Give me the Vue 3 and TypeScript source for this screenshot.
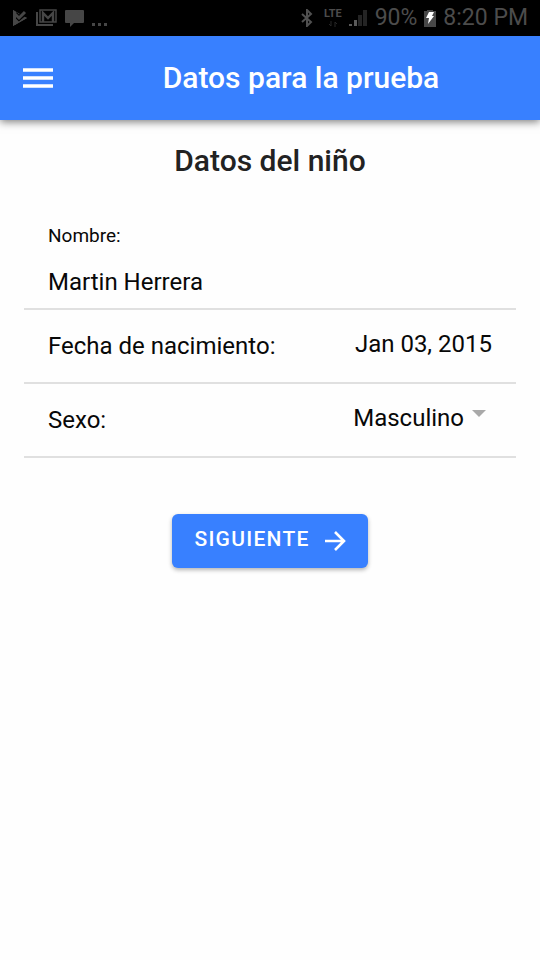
<script setup lang="ts">
import { ref } from 'vue'

const nombre = ref<string>('Martin Herrera')
const fecha = ref<string>('Jan 03, 2015')
const sexo = ref<string>('Masculino')
const opciones: string[] = ['Masculino', 'Femenino']
</script>

<template>
  <div class="screen">
    <div class="status">
      <div class="status-group left">
        <svg width="16" height="18" viewBox="0 0 16 18" aria-hidden="true">
          <path d="M1 1L15 9L1 17Z" fill="#464646" />
          <path d="M3 5L7 9L14 3" fill="none" stroke="#000" stroke-width="5" />
          <path d="M1 1L4 3V15L1 17Z" fill="#464646" />
          <path d="M3 5L7 9L13 3" fill="none" stroke="#464646" stroke-width="3" />
          <path d="M3 16V12L7 13L13 8L15 9Z" fill="#464646" />
        </svg>
        <svg width="21" height="18" viewBox="0 0 21 18" aria-hidden="true">
          <path d="M1 3V16H17" fill="none" stroke="#464646" stroke-width="2" />
          <path d="M4 1H20V13H4Z" fill="none" stroke="#464646" stroke-width="1.5" />
          <path d="M7 13V4L12 9L17 4V13" fill="none" stroke="#464646" stroke-width="2.4" />
        </svg>
        <svg width="19" height="18" viewBox="0 0 19 18" aria-hidden="true">
          <path d="M1 1H18Q19 1 19 2V13Q19 14 18 14H9L5 18V14H1Q0 14 0 13V2Q0 1 1 1Z" fill="#464646" />
        </svg>
        <svg width="15" height="18" viewBox="0 0 15 18" aria-hidden="true">
          <path d="M0 14H3V17H0ZM6 14H9V17H6ZM12 14H15V17H12Z" fill="#464646" />
        </svg>
      </div>
      <div class="status-group right">
        <svg width="12" height="18" viewBox="0 0 12 18" aria-hidden="true">
          <path d="M1 5L10 13L6 17V1L10 5L1 13" fill="none" stroke="#505050" stroke-width="2" />
        </svg>
        <span class="lte">
          <span>LTE</span>
          <svg width="10" height="6" viewBox="0 0 10 6" aria-hidden="true">
            <path d="M3 0V5M1 3L3 5M7 6V1M9 3L7 1" fill="none" stroke="#262626" />
          </svg>
        </span>
        <svg width="19" height="18" viewBox="0 0 19 18" aria-hidden="true">
          <path d="M0 15H3V17H0ZM5 11H8V17H5Z" fill="#5a5a5a" />
          <path d="M9 6H13V17H9ZM14 1H18V17H14Z" fill="#242424" />
        </svg>
        <span>90%</span>
        <svg width="12" height="18" viewBox="0 0 12 18" aria-hidden="true">
          <path d="M0 2H3V1H9V2H12V18H0Z" fill="#484848" />
          <path d="M5 3H10L8 7H10L4 15L5 9H2Z" fill="#fff" />
        </svg>
        <span>8:20 PM</span>
      </div>
    </div>

    <header class="toolbar">
      <button class="menu" type="button" aria-label="Menú">
        <svg width="30" height="22" viewBox="0 0 30 22" aria-hidden="true">
          <path d="M0 3H30M0 11H30M0 19H30" stroke="#fff" stroke-width="3.4" />
        </svg>
      </button>
      <h1>Datos para la prueba</h1>
    </header>

    <main>
      <h2>Datos del niño</h2>
      <form @submit.prevent>
        <div class="item stacked">
          <label class="small" for="nombre">Nombre:</label>
          <input id="nombre" v-model="nombre" type="text" />
        </div>
        <div class="item">
          <label for="fecha">Fecha de nacimiento:</label>
          <button id="fecha" class="value" type="button">{{ fecha }}</button>
        </div>
        <div class="item">
          <label for="sexo">Sexo:</label>
          <span class="value select">
            <select id="sexo" v-model="sexo">
              <option v-for="o in opciones" :key="o" :value="o">{{ o }}</option>
            </select>
            <svg class="caret" width="14" height="8" viewBox="0 0 14 8" aria-hidden="true">
              <path d="M0 0H14L7 7Z" fill="#a9a9a9" />
            </svg>
          </span>
        </div>
        <button class="next" type="submit">
          <span class="next-text">SIGUIENTE</span>
          <svg width="22" height="22" viewBox="0 0 22 22" aria-hidden="true">
            <path d="M1 11H20M11 2L20 11L11 20" fill="none" stroke="#fff" stroke-width="2.6" />
          </svg>
        </button>
      </form>
    </main>
  </div>
</template>

<style>
body {
  background: #fefefe;
}
</style>

<style scoped>
.screen {
  min-height: 100vh;
  font-family: Roboto, "Liberation Sans", sans-serif;
  font-size: 24px;
  color: #080808;
}

button,
input,
select {
  font: inherit;
  color: inherit;
  border: 0;
  padding: 0;
  margin: 0;
  background: none;
}

.status {
  display: flex;
  justify-content: space-between;
  height: 36px;
  padding: 0 12px;
  background: #000;
  color: #4c4c4c;
  font-size: 23px;
  line-height: 38px;
}

.status-group {
  display: flex;
  align-items: center;
}

.left {
  gap: 8px;
}

.right {
  gap: 7px;
}

.lte {
  display: flex;
  flex-direction: column;
  align-items: center;
  gap: 2px;
  margin-left: 4px;
  font-size: 11px;
  font-weight: 700;
  line-height: 10px;
}

.toolbar {
  display: grid;
  grid-template-columns: 64px 1fr 64px;
  align-items: center;
  height: 84px;
  background: #3880ff;
  color: #fff;
  box-shadow: 0 2px 8px rgba(0, 0, 0, 0.5);
}

.menu {
  display: flex;
  justify-content: center;
  align-items: center;
  height: 48px;
  padding-left: 12px;
}

h1,
h2 {
  margin: 0;
  font-size: 30px;
  font-weight: 500;
  line-height: 36px;
  text-align: center;
}

h1 {
  padding-left: 62px;
  white-space: nowrap;
}

main {
  padding: 23px 24px;
}

h2 {
  color: #222;
}

form {
  display: flex;
  flex-direction: column;
  padding-top: 33px;
}

.item {
  display: flex;
  justify-content: space-between;
  align-items: center;
  min-height: 74px;
  box-sizing: border-box;
  padding: 0 24px;
  border-bottom: 2px solid #e0e0e0;
}

.stacked {
  flex-direction: column;
  align-items: stretch;
  gap: 16px;
  padding-top: 12px;
  padding-bottom: 8px;
}

.small {
  font-size: 19px;
  line-height: 24px;
}

#nombre {
  width: 100%;
  height: 36px;
}

.value {
  padding-bottom: 4px;
}

.select {
  display: flex;
  align-items: center;
  gap: 8px;
  padding-right: 6px;
}

select {
  appearance: none;
  field-sizing: content;
}

.caret {
  margin-bottom: 8px;
}

.next {
  display: flex;
  align-self: center;
  align-items: center;
  gap: 14px;
  height: 54px;
  margin-top: 56px;
  padding: 0 22px;
  border-radius: 6px;
  background: #3880ff;
  color: #fff;
  font-size: 21px;
  font-weight: 500;
  letter-spacing: 0.06em;
  box-shadow: 0 2px 4px rgba(0, 0, 0, 0.3);
}

.next-text {
  padding-bottom: 4px;
}
</style>
